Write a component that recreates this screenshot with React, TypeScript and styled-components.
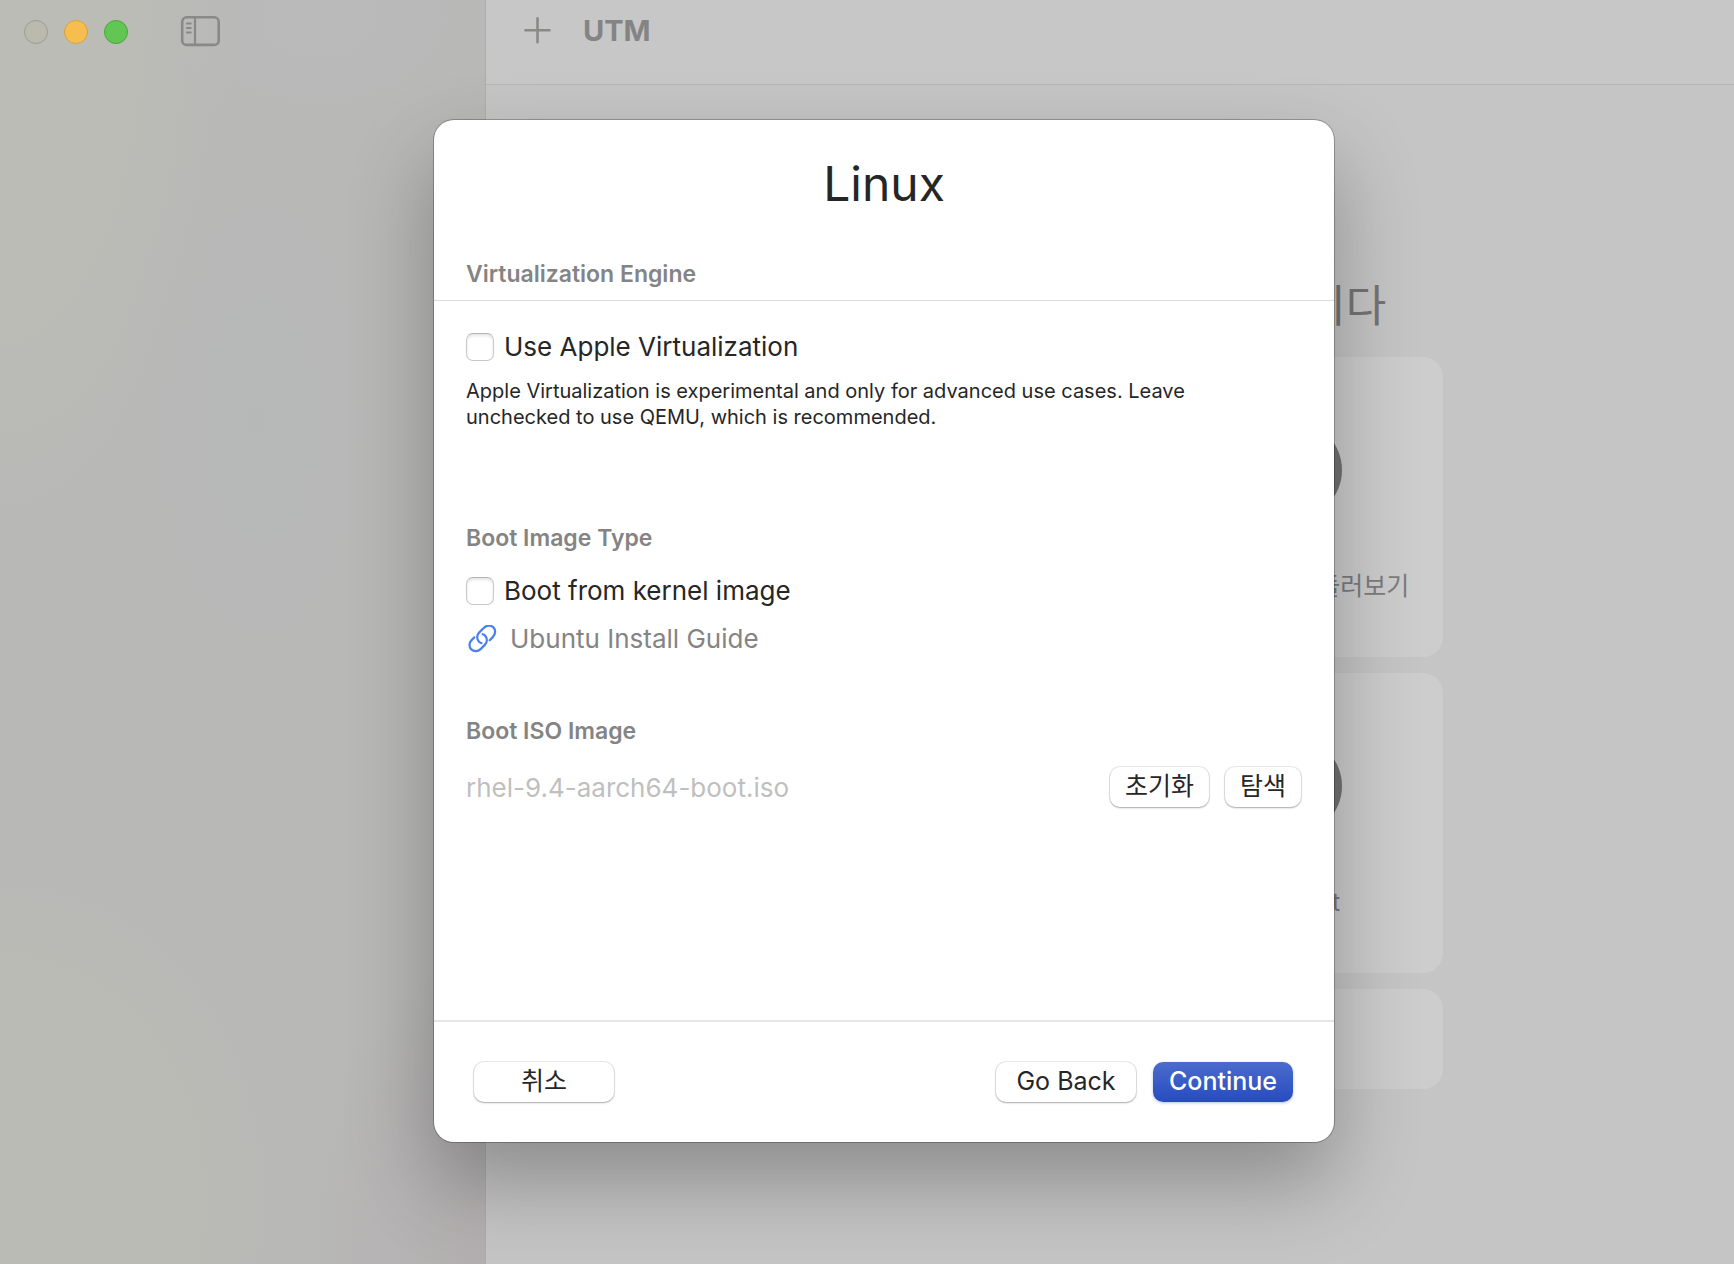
import React, { useState } from "react";
import styled, { createGlobalStyle, css } from "styled-components";

const GlobalStyle = createGlobalStyle`
  *, *::before, *::after { box-sizing: border-box; }
  body {
    margin: 0;
    background: #c5c5c5;
    color: #262626;
    font-family: Inter, "Noto Sans CJK KR", sans-serif;
    font-size: 26px;
    line-height: 28px;
  }
  button, input { font: inherit; color: inherit; }
`;

const Window = styled.div`
  position: relative;
  display: flex;
  min-height: 100vh;
  overflow: hidden;
`;

const Sidebar = styled.aside`
  flex: 0 0 486px;
  padding: 16px 24px;
  border-right: 1px solid #adadac;
  background:
    radial-gradient(ellipse 300px 360px at 0 1200px, #babbb4 0, #babbb4 60%, rgba(186, 187, 180, 0) 100%),
    radial-gradient(ellipse 240px 560px at 0 0, #bbbcb5 0, #bbbcb5 50%, rgba(187, 188, 181, 0) 100%),
    radial-gradient(ellipse 180px 120px at 320px 20px, #bababb 0, rgba(186, 186, 187, 0) 100%),
    radial-gradient(ellipse 140px 300px at 260px 420px, #b6b8b7 0, rgba(182, 184, 183, 0) 100%),
    radial-gradient(ellipse 180px 300px at 480px 1264px, #b3afb0 0, rgba(179, 175, 176, 0) 100%),
    #b8b8b7;
`;

const WindowControls = styled.div`
  display: flex;
  align-items: center;
  gap: 16px;
  height: 32px;
`;

const Light = styled.button<{ $fill: string; $edge: string }>`
  width: 24px;
  height: 24px;
  padding: 0;
  border: 1px solid ${(p) => p.$edge};
  border-radius: 50%;
  background: ${(p) => p.$fill};
`;

const IconButton = styled.button`
  display: flex;
  align-items: center;
  justify-content: center;
  padding: 0;
  border: 0;
  background: none;
  color: #898988;
`;

const SidebarToggle = styled(IconButton)`
  margin-left: 36px;
`;

const Main = styled.main`
  flex: 1;
  min-width: 0;
`;

const Toolbar = styled.header`
  display: flex;
  gap: 32px;
  height: 85px;
  padding: 15px 38px;
  border-bottom: 1px solid #b6b6b6;
  background: #c7c7c7;
`;

const ToolbarTitle = styled.h1`
  margin: 0;
  color: #848484;
  font-size: 29px;
  line-height: 32px;
  font-weight: 700;
`;

const AddButton = styled(IconButton)`
  height: 32px;
`;

const Welcome = styled.section`
  display: flex;
  flex-direction: column;
  align-items: center;
  padding: 191px 0 60px 50px;
`;

const WelcomeTitle = styled.h2`
  margin: 0 0 21px;
  color: #747474;
  font-size: 44px;
  line-height: 60px;
  font-weight: 400;
  white-space: nowrap;
`;

const CardGrid = styled.div`
  display: grid;
  grid-template-columns: 300px 300px;
  gap: 16px;
`;

const cardSurface = css`
  border: 0;
  border-radius: 20px;
  background: #cdcdcd;
  color: #7c7c7c;
  font-size: 25px;
`;

const Card = styled.button`
  ${cardSurface}
  display: flex;
  flex-direction: column;
  align-items: center;
  height: 300px;
  padding: 64px 0 0;
`;

const CardIcon = styled.span`
  width: 98px;
  height: 98px;
  margin-bottom: 53px;
  border-radius: 50%;
  background: #737373;
`;

const WideCard = styled.button`
  ${cardSurface}
  grid-column: 1 / -1;
  height: 100px;
`;

const SheetLayer = styled.div`
  position: absolute;
  inset: 0;
  display: flex;
  align-items: flex-start;
  justify-content: center;
  padding: 120px 0 0 34px;
`;

const Sheet = styled.form`
  width: 900px;
  max-width: 100%;
  border-radius: 20px;
  background: #fff;
  box-shadow: 0 0 0 1px rgba(0, 0, 0, 0.25), 0 40px 84px rgba(0, 0, 0, 0.29);
`;

const SheetTitle = styled.h2`
  margin: 0;
  padding: 34px 0 46px;
  font-size: 48px;
  line-height: 60px;
  font-weight: 400;
  text-align: center;
`;

const SectionTitle = styled.h3`
  margin: 0;
  color: #848484;
  font-size: 23px;
  line-height: 28px;
  font-weight: 600;
`;

const EngineHeader = styled.div`
  padding: 0 32px 12px;
  border-bottom: 1px solid #dcdcdc;
`;

const SheetBody = styled.div`
  min-height: 719px;
  padding: 32px 33px 32px 32px;
`;

const Section = styled.section`
  & + & { padding-top: 64px; }
`;

const EngineSection = styled.section`
  padding-bottom: 94px;
`;

const CheckRow = styled.label`
  display: flex;
  align-items: center;
  gap: 10px;
`;

const CheckBox = styled.input`
  appearance: none;
  flex: none;
  width: 28px;
  height: 28px;
  margin: 0;
  border: 1px solid #c9c9c9;
  border-top-color: #b4b4b4;
  border-radius: 7px;
  background: #fff;
  box-shadow: inset 0 2px 3px rgba(0, 0, 0, 0.1);
  &:checked { background: #3a5fcb; }
`;

const Note = styled.p`
  max-width: 780px;
  margin: 17px 0 0;
  font-size: 20px;
  line-height: 26px;
`;

const BootOptions = styled.div`
  display: flex;
  flex-direction: column;
  align-items: flex-start;
  gap: 20px;
  padding-top: 25px;
`;

const GuideLink = styled.a`
  display: flex;
  align-items: center;
  gap: 12px;
  color: #848484;
  text-decoration: none;
`;

const FileRow = styled.div`
  display: flex;
  align-items: center;
  gap: 16px;
  padding-top: 22px;
`;

const FileField = styled.input`
  flex: 1;
  min-width: 0;
  height: 40px;
  padding: 0;
  border: 0;
  background: none;
  color: #bfbfbf;
`;

const PushButton = styled.button<{ $primary?: boolean; $wide?: boolean }>`
  height: 40px;
  min-width: ${(p) => (p.$wide ? "140px" : "0")};
  padding: 0 15px 2px;
  border: 0;
  border-radius: 10px;
  font-size: 25px;
  line-height: 38px;
  background: #fff;
  box-shadow: 0 0 0 1px rgba(0, 0, 0, 0.08), 0 1px 2px rgba(0, 0, 0, 0.28);
  ${(p) =>
    p.$primary &&
    css`
      background: linear-gradient(#4a6ccc, #284bc0);
      color: #fff;
      font-weight: 500;
      box-shadow: 0 1px 3px rgba(40, 75, 192, 0.35);
    `}
`;

const SheetFooter = styled.footer`
  display: flex;
  justify-content: space-between;
  padding: 40px 41px 40px 40px;
  border-top: 2px solid #e6e6e6;
`;

const FooterActions = styled.div`
  display: flex;
  gap: 17px;
`;

const SidebarIcon = () => (
  <svg width="40" height="32" viewBox="0 0 40 32" fill="none" stroke="currentColor" aria-hidden="true">
    <rect x="2.200" y="1.300" width="36.500" height="27.600" rx="4.500" strokeWidth="2.600" />
    <path d="M15 1.500v27" strokeWidth="2.200" />
    <path d="M6.800 7.500h4M6.800 12h4M6.800 16.500h4" strokeWidth="1.900" strokeLinecap="round" />
  </svg>
);

const PlusIcon = () => (
  <svg width="27" height="28" viewBox="0 0 27 28" fill="none" stroke="currentColor" strokeWidth="2.600" strokeLinecap="round" aria-hidden="true">
    <path d="M13.500 1.300v24M1.500 13.300h24" />
  </svg>
);

const LinkIcon = () => (
  <svg width="32" height="28" viewBox="2 4.800 32 28" fill="none" stroke="#4a80ee" strokeWidth="2.200" strokeLinecap="round" strokeLinejoin="round" aria-hidden="true">
    <path d="M10.300 17.200L7.600 19.900C4.900 22.600 4.800 26.700 7.300 29.200C9.800 31.700 13.900 31.600 16.600 28.900L20.800 24.700C23.500 22 23.600 17.900 21.100 15.400C20.400 14.700 19.500 14.200 18.600 14" />
    <path d="M25.700 20.100L28.600 17.200C31.700 14.100 31.900 9.700 29.400 7.200C26.900 4.700 22.700 4.800 20 7.500L15.300 12.200C12.600 14.900 12.500 19 15 21.500C15.700 22.200 16.500 22.700 17.400 22.900" />
  </svg>
);

export default function App() {
  const [useApple, setUseApple] = useState(false);
  const [fromKernel, setFromKernel] = useState(false);

  return (
    <>
      <GlobalStyle />
      <Window>
        <Sidebar>
          <WindowControls>
            <Light $fill="#babbae" $edge="#9c9d92" aria-label="Close" />
            <Light $fill="#f6be4f" $edge="#d9a23c" aria-label="Minimize" />
            <Light $fill="#62c655" $edge="#4ba53f" aria-label="Zoom" />
            <SidebarToggle aria-label="Toggle sidebar">
              <SidebarIcon />
            </SidebarToggle>
          </WindowControls>
        </Sidebar>
        <Main>
          <Toolbar>
            <AddButton aria-label="New virtual machine">
              <PlusIcon />
            </AddButton>
            <ToolbarTitle>UTM</ToolbarTitle>
          </Toolbar>
          <Welcome>
            <WelcomeTitle>UTM에 오신 걸 환영합니다</WelcomeTitle>
            <CardGrid>
              <Card>
                <CardIcon />새로 만들기
              </Card>
              <Card>
                <CardIcon />UTM 갤러리 둘러보기
              </Card>
              <Card>
                <CardIcon />사용자 가이드
              </Card>
              <Card>
                <CardIcon />Support
              </Card>
              <WideCard>서버</WideCard>
            </CardGrid>
          </Welcome>
        </Main>
        <SheetLayer>
          <Sheet role="dialog" aria-labelledby="sheet-title" onSubmit={(e) => e.preventDefault()}>
            <SheetTitle id="sheet-title">Linux</SheetTitle>
            <EngineHeader>
              <SectionTitle>Virtualization Engine</SectionTitle>
            </EngineHeader>
            <SheetBody>
              <EngineSection>
                <CheckRow>
                  <CheckBox type="checkbox" checked={useApple} onChange={(e) => setUseApple(e.target.checked)} />
                  Use Apple Virtualization
                </CheckRow>
                <Note>
                  Apple Virtualization is experimental and only for advanced use cases. Leave unchecked to use QEMU,
                  which is recommended.
                </Note>
              </EngineSection>
              <Section>
                <SectionTitle>Boot Image Type</SectionTitle>
                <BootOptions>
                  <CheckRow>
                    <CheckBox type="checkbox" checked={fromKernel} onChange={(e) => setFromKernel(e.target.checked)} />
                    Boot from kernel image
                  </CheckRow>
                  <GuideLink href="#ubuntu-guide">
                    <LinkIcon />
                    Ubuntu Install Guide
                  </GuideLink>
                </BootOptions>
              </Section>
              <Section>
                <SectionTitle id="iso-title">Boot ISO Image</SectionTitle>
                <FileRow>
                  <FileField aria-labelledby="iso-title" value="rhel-9.4-aarch64-boot.iso" disabled readOnly />
                  <PushButton type="button">초기화</PushButton>
                  <PushButton type="button">탐색</PushButton>
                </FileRow>
              </Section>
            </SheetBody>
            <SheetFooter>
              <PushButton type="button" $wide>취소</PushButton>
              <FooterActions>
                <PushButton type="button" $wide>Go Back</PushButton>
                <PushButton type="submit" $wide $primary>Continue</PushButton>
              </FooterActions>
            </SheetFooter>
          </Sheet>
        </SheetLayer>
      </Window>
    </>
  );
}
